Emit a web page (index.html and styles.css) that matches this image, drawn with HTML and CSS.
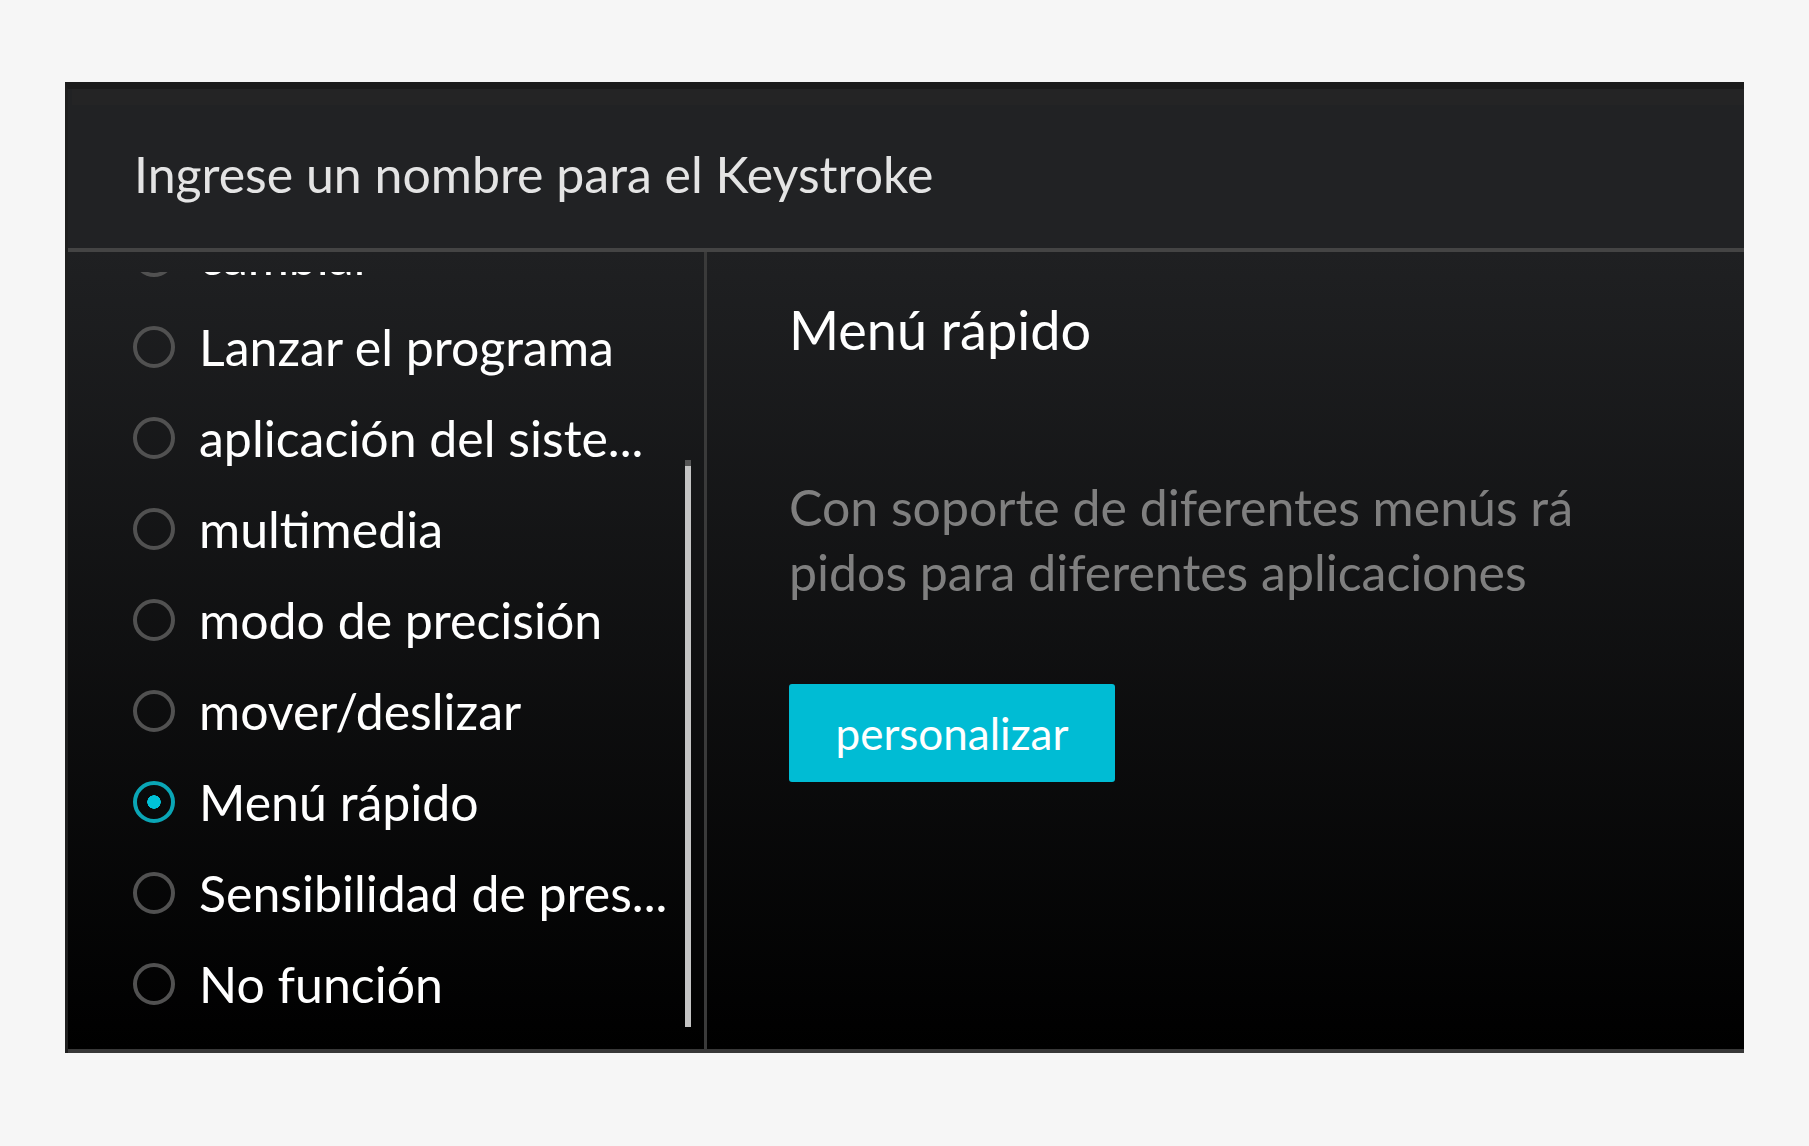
FILE: index.html
```html
<!DOCTYPE html>
<html lang="es">
<head>
    <meta charset="UTF-8">
    <meta name="viewport" content="width=device-width, initial-scale=1.0">
    <title>Keystroke</title>
    <link rel="stylesheet" href="styles.css">
</head>
<body>
  <div class="window">
    <div class="titlebar"></div>
    <div class="header">Ingrese un nombre para el Keystroke</div>

    <div class="content">
      <div class="left">
        <div class="list-view">
          <ul class="options">
            <li class="option"><span class="radio"></span>cambiar</li>
            <li class="option"><span class="radio"></span>Lanzar el programa</li>
            <li class="option"><span class="radio"></span>aplicación del siste...</li>
            <li class="option"><span class="radio"></span>multimedia</li>
            <li class="option"><span class="radio"></span>modo de precisión</li>
            <li class="option"><span class="radio"></span>mover/deslizar</li>
            <li class="option selected"><span class="radio"></span>Menú rápido</li>
            <li class="option"><span class="radio"></span>Sensibilidad de pres...</li>
            <li class="option"><span class="radio"></span>No función</li>
          </ul>
        </div>
        <div class="scrollbar"></div>
      </div>

      <div class="right">
        <h2 class="right-title">Menú rápido</h2>
        <p class="desc">Con soporte de diferentes menús rá<br>pidos para diferentes aplicaciones</p>
        <button class="btn">personalizar</button>
      </div>
    </div>
  </div>
</body>
</html>
```

FILE: styles.css
```css
body {
  margin: 0;
  background: #f6f6f6;
  font-family: Lato, "Open Sans", sans-serif;
}

.window {
  margin: 82px 0 0 65px;
  width: 1679px;
  border-top: 7px solid #1b1b1b;
  border-left: 3px solid #1f1f1f;
  background: #212224;
  box-sizing: border-box;
}

.titlebar {
  height: 16px;
  margin-left: 4px;
  background: #242425;
}

.header {
  height: 147px;
  box-sizing: border-box;
  padding: 39px 0 0 66px;
  font-size: 50px;
  line-height: 60px;
  color: #e4e4e4;
  border-bottom: 4px solid #444;
}

.content {
  display: flex;
  height: 801px;
  box-sizing: border-box;
  border-bottom: 4px solid #383838;
  background: linear-gradient(#1f2022, #000 100%);
}

.left {
  position: relative;
  width: 636px;
  padding-top: 20px;
  border-right: 3px solid #3a3a3a;
}

.list-view {
  height: 758px;
  overflow: hidden;
}

.options {
  list-style: none;
  margin: -62px 0 0;
  padding: 0;
}

.option {
  display: flex;
  align-items: center;
  gap: 24px;
  height: 91px;
  padding-left: 65px;
  font-size: 50px;
  color: #fff;
  white-space: nowrap;
}

.radio {
  flex: none;
  width: 42px;
  height: 42px;
  box-sizing: border-box;
  border: 4px solid #515151;
  border-radius: 50%;
}

.selected .radio {
  border-color: #0aa6b6;
  background: radial-gradient(circle, #00c2d8 0 6.5px, transparent 7px);
}

.scrollbar {
  position: absolute;
  top: 208px;
  left: 617px;
  width: 6px;
  height: 561px;
  background: #c4c4c4;
  border-top: 6px solid #555;
}

.right {
  flex: 1;
  padding-left: 82px;
}

.right-title {
  margin: 46px 0 0;
  font-size: 54px;
  line-height: 64px;
  font-weight: 400;
  color: #fff;
}

.desc {
  margin: 113px 0 0;
  font-size: 50px;
  line-height: 65px;
  color: #7f7f7f;
}

.btn {
  display: block;
  margin-top: 79px;
  width: 326px;
  height: 98px;
  padding: 0;
  border: none;
  border-radius: 3px;
  background: #00bcd4;
  color: #fff;
  font-family: inherit;
  font-size: 44px;
  cursor: pointer;
}
```
